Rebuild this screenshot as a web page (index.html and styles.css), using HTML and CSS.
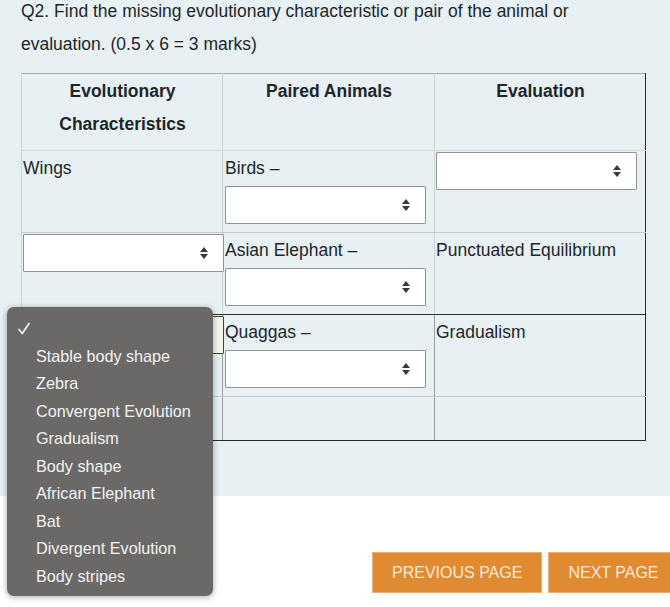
FILE: index.html
```html
<!DOCTYPE html>
<html lang="en">
<head>
<meta charset="utf-8">
<title>Q2</title>
<link rel="stylesheet" href="styles.css">
</head>
<body>
<div class="page">
  <div class="panel">
    <p class="question">Q2. Find the missing evolutionary characteristic or pair of the animal or<br>evaluation. (0.5 x 6 = 3 marks)</p>
    <table class="grid">
      <colgroup><col class="c1"><col class="c2"><col class="c3"></colgroup>
      <thead>
        <tr>
          <th>Evolutionary<br>Characteristics</th>
          <th>Paired Animals</th>
          <th>Evaluation</th>
        </tr>
      </thead>
      <tbody>
        <tr class="r1">
          <td>Wings</td>
          <td class="mid"><div class="txt">Birds –</div><div class="sel"><svg class="arr" viewBox="0 0 8 12" width="8" height="12"><polygon points="0,5 4,0 8,5"/><polygon points="0,7 4,12 8,7"/></svg></div></td>
          <td><div class="sel top"><svg class="arr" viewBox="0 0 8 12" width="8" height="12"><polygon points="0,5 4,0 8,5"/><polygon points="0,7 4,12 8,7"/></svg></div></td>
        </tr>
        <tr class="r2">
          <td><div class="sel top"><svg class="arr" viewBox="0 0 8 12" width="8" height="12"><polygon points="0,5 4,0 8,5"/><polygon points="0,7 4,12 8,7"/></svg></div></td>
          <td class="mid"><div class="txt">Asian Elephant –</div><div class="sel"><svg class="arr" viewBox="0 0 8 12" width="8" height="12"><polygon points="0,5 4,0 8,5"/><polygon points="0,7 4,12 8,7"/></svg></div></td>
          <td><div class="txt">Punctuated Equilibrium</div></td>
        </tr>
        <tr class="r3">
          <td><div class="sel top focus"></div></td>
          <td class="mid"><div class="txt">Quaggas –</div><div class="sel"><svg class="arr" viewBox="0 0 8 12" width="8" height="12"><polygon points="0,5 4,0 8,5"/><polygon points="0,7 4,12 8,7"/></svg></div></td>
          <td><div class="txt">Gradualism</div></td>
        </tr>
        <tr class="r4">
          <td></td>
          <td class="mid"></td>
          <td></td>
        </tr>
      </tbody>
    </table>
  </div>
  <div class="nav">
    <button class="btn">PREVIOUS PAGE</button>
    <button class="btn">NEXT PAGE</button>
  </div>
  <ul class="menu">
    <li class="checked"><svg class="check" viewBox="0 0 12 13" width="12" height="13"><path d="M1 7.5 L4.3 11.5 L11 1.5" fill="none" stroke="#f3f3f3" stroke-width="1.7" stroke-linecap="round" stroke-linejoin="round"/></svg></li>
    <li>Stable body shape</li>
    <li>Zebra</li>
    <li>Convergent Evolution</li>
    <li>Gradualism</li>
    <li>Body shape</li>
    <li>African Elephant</li>
    <li>Bat</li>
    <li>Divergent Evolution</li>
    <li>Body stripes</li>
  </ul>
</div>
</body>
</html>
```

FILE: styles.css
```css
html, body {
  margin: 0;
  padding: 0;
  overflow: hidden;
  background: #ffffff;
}

.page {
  position: relative;
  width: 670px;
  height: 607px;
  overflow: hidden;
  font-family: "Liberation Sans", Arial, sans-serif;
  color: #1e2628;
}

.panel {
  background: #e7f0f3;
  height: 496px;
  box-sizing: border-box;
  padding: 0 0 0 21px;
  overflow: hidden;
}

.question {
  margin: -5px 0 0 0;
  font-size: 17.5px;
  line-height: 33px;
  color: #1e2628;
  white-space: nowrap;
}

.grid {
  margin-top: 12px;
  border-collapse: collapse;
  table-layout: fixed;
  width: 624px;
  font-size: 17.5px;
  line-height: 33px;
  border-top: 1px solid #a7acad;
  border-left: 1px solid #232b2d;
  border-right: 1px solid #232b2d;
  border-bottom: 1px solid #232b2d;
}

.c1 { width: 201px; }
.c2 { width: 212px; }
.c3 { width: 211px; }

.grid th,
.grid td {
  vertical-align: top;
  text-align: left;
  padding: 1px 0 0 1px;
  border-left: 1px solid #cdd6d9;
  border-bottom: 1px solid #c3cacc;
}

.grid th {
  text-align: center;
  font-weight: bold;
  padding-bottom: 9px;
  border-bottom-color: #d2dadd;
}

.grid td.mid {
  padding-left: 2px;
}

.grid .r2 td {
  border-bottom-color: #2d3436;
}

.grid .r3 td,
.grid .r4 td {
  border-left-color: #9aa1a3;
}

.grid .r3 td:first-child,
.grid .r4 td:first-child {
  border-left-color: #232b2d;
}

.grid .r4 td {
  height: 43px;
  padding: 0;
  border-bottom-color: #232b2d;
}

.txt {
  height: 33px;
  white-space: nowrap;
}

.sel {
  position: relative;
  width: 201px;
  height: 38px;
  box-sizing: border-box;
  margin: 1px 0 8px 0;
  background: #ffffff;
  border: 1px solid #8f9394;
  border-radius: 1px;
}

.sel.top {
  margin-top: 0;
}

.sel.focus {
  border-color: #4a4828;
  background: #f3f4ee;
}

.arr {
  position: absolute;
  right: 15px;
  top: 12px;
  fill: #3a3a3a;
}

.nav {
  display: flex;
  gap: 6px;
  margin-top: 56px;
  margin-left: 372px;
}

.btn {
  flex: none;
  height: 41px;
  padding: 0 19px;
  border: 1px solid #eab078;
  background: #e08a32;
  color: #fcebd6;
  font-family: "Liberation Sans", Arial, sans-serif;
  font-size: 16px;
  white-space: nowrap;
}

.menu {
  position: absolute;
  left: 7px;
  top: 307px;
  width: 206px;
  height: 289px;
  box-sizing: border-box;
  margin: 0;
  padding: 8px 0 0 0;
  list-style: none;
  background: #6b6967;
  border-radius: 7px;
  box-shadow: 0 1px 6px rgba(0, 0, 0, 0.35);
  color: #f3f3f3;
  font-size: 16.2px;
}

.menu li {
  height: 27.5px;
  line-height: 27.5px;
  padding-left: 29px;
  white-space: nowrap;
}

.menu li.checked {
  display: flex;
  align-items: center;
  padding-left: 11px;
}

.check {
  display: block;
}
```
